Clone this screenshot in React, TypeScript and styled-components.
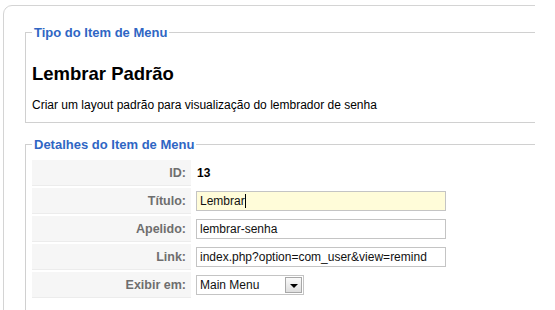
import styled, { createGlobalStyle } from "styled-components";

const GlobalStyle = createGlobalStyle`
  html, body {
    margin: 0;
    padding: 0;
    background: #fff;
    overflow: hidden;
  }
  body {
    font-family: "Liberation Sans", Arial, sans-serif;
    color: #000;
  }
`;

const Viewport = styled.div`
  width: 535px;
  height: 310px;
  overflow: hidden;
  padding: 5px 0 0 3px;
  box-sizing: border-box;
`;

const Panel = styled.div`
  width: 640px;
  height: 400px;
  box-sizing: border-box;
  border: 1px solid #d4d4d4;
  border-radius: 9px;
  padding: 19px 0 0 21px;
`;

const Fieldset = styled.fieldset<{ $gap?: number; $bottom?: number }>`
  margin: ${(p) => p.$gap ?? 0}px 0 0 0;
  padding: 0 8px ${(p) => p.$bottom ?? 10}px 6px;
  border: 1px solid #d0d0d0;
  width: 560px;
  box-sizing: border-box;
`;

const Legend = styled.legend`
  padding: 0 2px;
  color: #2f66c4;
  font-size: 13px;
  font-weight: bold;
  line-height: 15px;
`;

const Heading = styled.h2`
  margin: 22px 0 13px 0;
  font-size: 18.5px;
  line-height: 23px;
  font-weight: bold;
`;

const Description = styled.p`
  margin: 0;
  font-size: 12px;
  line-height: 14px;
`;

const DetailGrid = styled.div`
  margin-top: 8px;
  display: grid;
  grid-template-columns: 159px 1fr;
  column-gap: 3px;
  row-gap: 2px;
  width: 500px;
`;

const KeyCell = styled.div`
  height: 26px;
  background: #f6f6f6;
  border-bottom: 1px solid #ececec;
  box-sizing: border-box;
  display: flex;
  align-items: center;
  justify-content: flex-end;
  padding-right: 5px;
  color: #6e6e6e;
  font-size: 12.5px;
  font-weight: bold;
`;

const ValueCell = styled.div`
  height: 26px;
  display: flex;
  align-items: center;
  padding-left: 2px;
  font-size: 12px;
`;

const StaticValue = styled.span`
  font-weight: bold;
  padding-left: 1px;
`;

const TextBox = styled.div<{ $focus?: boolean }>`
  width: 250px;
  height: 20px;
  box-sizing: border-box;
  border: 1px solid #c4c4c4;
  background: ${(p) => (p.$focus ? "#fffcd9" : "#fff")};
  display: flex;
  align-items: center;
  padding-left: 3px;
  font-size: 12px;
  color: #111;
  white-space: nowrap;
  overflow: hidden;
`;

const Caret = styled.span`
  display: inline-block;
  width: 1px;
  height: 14px;
  background: #000;
`;

const SelectBox = styled.div`
  width: 108px;
  height: 20px;
  box-sizing: border-box;
  border: 1px solid #c4c4c4;
  background: #fff;
  display: flex;
  align-items: center;
  font-size: 12px;
  color: #111;
`;

const SelectText = styled.span`
  flex: 1;
  padding-left: 3px;
`;

const SelectButton = styled.span`
  width: 17px;
  height: 16px;
  margin-right: 1px;
  box-sizing: border-box;
  border: 1px solid #a8a8a8;
  background: linear-gradient(180deg, #fafafa 0%, #dedede 100%);
  display: flex;
  align-items: center;
  justify-content: center;
`;

const Arrow = styled.span`
  width: 0;
  height: 0;
  border-left: 4px solid transparent;
  border-right: 4px solid transparent;
  border-top: 4px solid #000;
  margin-top: 1px;
`;

const rows = [
  { key: "Título:", value: "Lembrar", focus: true },
  { key: "Apelido:", value: "lembrar-senha" },
  { key: "Link:", value: "index.php?option=com_user&view=remind" },
];

export default function App() {
  return (
    <>
      <GlobalStyle />
      <Viewport>
        <Panel>
          <Fieldset>
            <Legend>Tipo do Item de Menu</Legend>
            <Heading>Lembrar Padrão</Heading>
            <Description>Criar um layout padrão para visualização do lembrador de senha</Description>
          </Fieldset>

          <Fieldset $gap={14} $bottom={40}>
            <Legend>Detalhes do Item de Menu</Legend>
            <DetailGrid>
              <KeyCell>ID:</KeyCell>
              <ValueCell>
                <StaticValue>13</StaticValue>
              </ValueCell>
              {rows.map((r) => [
                <KeyCell key={r.key}>{r.key}</KeyCell>,
                <ValueCell key={r.key + "v"}>
                  <TextBox $focus={r.focus}>
                    {r.value}
                    {r.focus && <Caret />}
                  </TextBox>
                </ValueCell>,
              ])}
              <KeyCell>Exibir em:</KeyCell>
              <ValueCell>
                <SelectBox>
                  <SelectText>Main Menu</SelectText>
                  <SelectButton>
                    <Arrow />
                  </SelectButton>
                </SelectBox>
              </ValueCell>
            </DetailGrid>
          </Fieldset>
        </Panel>
      </Viewport>
    </>
  );
}
